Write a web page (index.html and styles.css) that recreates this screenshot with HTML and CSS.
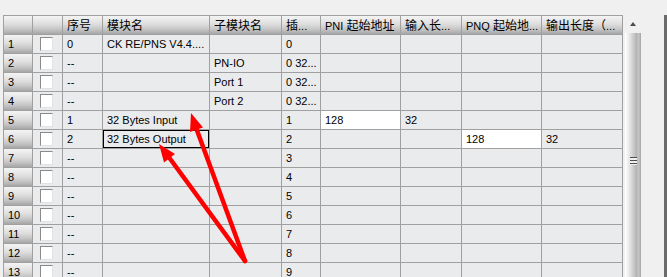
FILE: index.html
```html
<!DOCTYPE html>
<html lang="en">
<head>
    <meta charset="UTF-8">
    <title>Module Table</title>
    <link rel="stylesheet" href="styles.css">
</head>
<body>
    <div class="window">
        <div class="grid">
            <div class="hd"></div>
            <div class="hd"></div>
            <div class="hd"><span class="zh">序号</span></div>
            <div class="hd"><span class="zh">模块名</span></div>
            <div class="hd"><span class="zh">子模块名</span></div>
            <div class="hd"><span class="zh">插</span>...</div>
            <div class="hd">PNI <span class="zh">起始地址</span></div>
            <div class="hd"><span class="zh">输入长</span>...</div>
            <div class="hd">PNQ <span class="zh">起始地</span>...</div>
            <div class="hd"><span class="zh">输出长度（</span>...</div>

            <div class="rh">1</div><div class="c"><span class="cb"></span></div><div class="c">0</div><div class="c">CK RE/PNS V4.4....</div><div class="c"></div><div class="c">0</div><div class="c"></div><div class="c"></div><div class="c"></div><div class="c"></div>
            <div class="rh">2</div><div class="c"><span class="cb"></span></div><div class="c">--</div><div class="c"></div><div class="c">PN-IO</div><div class="c">0 32...</div><div class="c"></div><div class="c"></div><div class="c"></div><div class="c"></div>
            <div class="rh">3</div><div class="c"><span class="cb"></span></div><div class="c">--</div><div class="c"></div><div class="c">Port 1</div><div class="c">0 32...</div><div class="c"></div><div class="c"></div><div class="c"></div><div class="c"></div>
            <div class="rh">4</div><div class="c"><span class="cb"></span></div><div class="c">--</div><div class="c"></div><div class="c">Port 2</div><div class="c">0 32...</div><div class="c"></div><div class="c"></div><div class="c"></div><div class="c"></div>
            <div class="rh">5</div><div class="c"><span class="cb"></span></div><div class="c">1</div><div class="c">32 Bytes Input</div><div class="c"></div><div class="c">1</div><div class="c edit">128</div><div class="c">32</div><div class="c"></div><div class="c"></div>
            <div class="rh">6</div><div class="c"><span class="cb"></span></div><div class="c">2</div><div class="c focus">32 Bytes Output</div><div class="c"></div><div class="c">2</div><div class="c"></div><div class="c"></div><div class="c edit">128</div><div class="c">32</div>
            <div class="rh">7</div><div class="c"><span class="cb"></span></div><div class="c">--</div><div class="c"></div><div class="c"></div><div class="c">3</div><div class="c"></div><div class="c"></div><div class="c"></div><div class="c"></div>
            <div class="rh">8</div><div class="c"><span class="cb"></span></div><div class="c">--</div><div class="c"></div><div class="c"></div><div class="c">4</div><div class="c"></div><div class="c"></div><div class="c"></div><div class="c"></div>
            <div class="rh">9</div><div class="c"><span class="cb"></span></div><div class="c">--</div><div class="c"></div><div class="c"></div><div class="c">5</div><div class="c"></div><div class="c"></div><div class="c"></div><div class="c"></div>
            <div class="rh">10</div><div class="c"><span class="cb"></span></div><div class="c">--</div><div class="c"></div><div class="c"></div><div class="c">6</div><div class="c"></div><div class="c"></div><div class="c"></div><div class="c"></div>
            <div class="rh">11</div><div class="c"><span class="cb"></span></div><div class="c">--</div><div class="c"></div><div class="c"></div><div class="c">7</div><div class="c"></div><div class="c"></div><div class="c"></div><div class="c"></div>
            <div class="rh">12</div><div class="c"><span class="cb"></span></div><div class="c">--</div><div class="c"></div><div class="c"></div><div class="c">8</div><div class="c"></div><div class="c"></div><div class="c"></div><div class="c"></div>
            <div class="rh">13</div><div class="c"><span class="cb"></span></div><div class="c">--</div><div class="c"></div><div class="c"></div><div class="c">9</div><div class="c"></div><div class="c"></div><div class="c"></div><div class="c"></div>
        </div>

        <div class="scrollbar">
            <div class="sb-up"><span class="tri"></span></div>
            <div class="sb-thumb">
                <span class="grip"></span>
            </div>
        </div>

        <div class="filler"></div>
        <div class="edge"></div>
    </div>

    <svg class="arrows" width="667" height="277" viewBox="0 0 667 277">
        <g stroke="#ff0000" stroke-width="4.5" stroke-linecap="round" fill="#ff0000">
            <line x1="245" y1="261" x2="196.5" y2="129"></line>
            <line x1="245" y1="261" x2="169.5" y2="158"></line>
        </g>
        <g fill="#ff0000">
            <polygon points="191,113 203,127.5 190,132"></polygon>
            <polygon points="159,144 175,154 164,162.5"></polygon>
        </g>
    </svg>
</body>
</html>
```

FILE: styles.css
```css
html, body {
    margin: 0;
    height: 100%;
    overflow: hidden;
}
body {
    background-color: #f0f0f0;
    font-family: "Liberation Sans", Arial, "Noto Sans CJK SC", sans-serif;
    font-size: 11px;
    color: #000;
    position: relative;
}
.zh {
    font-family: "Noto Sans CJK SC", sans-serif;
    font-size: 12px;
}
.window {
    display: flex;
    height: 100%;
    padding-top: 15px;
    padding-left: 3px;
    box-sizing: border-box;
}
.grid {
    display: grid;
    grid-template-columns: 28px 29px 39px 106px 71px 38px 79px 60px 79px 80px;
    grid-auto-rows: 18px;
    gap: 1px;
    padding: 1px;
    background-color: #a0a0a0;
    align-self: flex-start;
    flex-shrink: 0;
}
.hd, .rh, .c {
    padding: 0 4px;
    line-height: 18px;
    white-space: nowrap;
    overflow: hidden;
}
.hd, .rh {
    background: linear-gradient(#f4f4f4, #dedede 45%, #c4c4c4 75%, #a6a6a6);
}
.c {
    background-color: #eaebed;
}
.c.edit {
    background-color: #fff;
}
.c.focus {
    outline: 1px solid #000;
    outline-offset: -1px;
}
.cb {
    display: block;
    width: 11px;
    height: 12px;
    margin: 2px 0 0 3px;
    background-color: #fff;
    border-top: 1px solid #8a8a8a;
    border-left: 1px solid #8a8a8a;
    border-right: 1px solid #e2e2e2;
    border-bottom: 1px solid #e2e2e2;
}
.scrollbar {
    width: 16px;
    margin-left: 2px;
    display: flex;
    flex-direction: column;
    flex-shrink: 0;
}
.sb-up {
    height: 18px;
    display: flex;
    justify-content: center;
    align-items: center;
}
.tri {
    width: 0;
    height: 0;
    border-left: 3px solid transparent;
    border-right: 3px solid transparent;
    border-bottom: 4px solid #4a4a4a;
}
.sb-thumb {
    flex: 1;
    background: linear-gradient(to right, #fafafa, #e4e4e4 25%, #cfcfcf 45%, #b4b4b4 70%, #c6c6c6 85%, #a4a4a4);
    border-left: 1px solid #fff;
    position: relative;
}
.grip {
    position: absolute;
    left: 4px;
    top: 124px;
    width: 7px;
    height: 8px;
    background: repeating-linear-gradient(#4e4e4e 0, #4e4e4e 1px, #f0f0f0 1px, #f0f0f0 3px);
}
.filler {
    flex: 1;
}
.edge {
    width: 3px;
    background-color: #6b6b6b;
}
.arrows {
    position: absolute;
    left: 0;
    top: 0;
    pointer-events: none;
}
```
